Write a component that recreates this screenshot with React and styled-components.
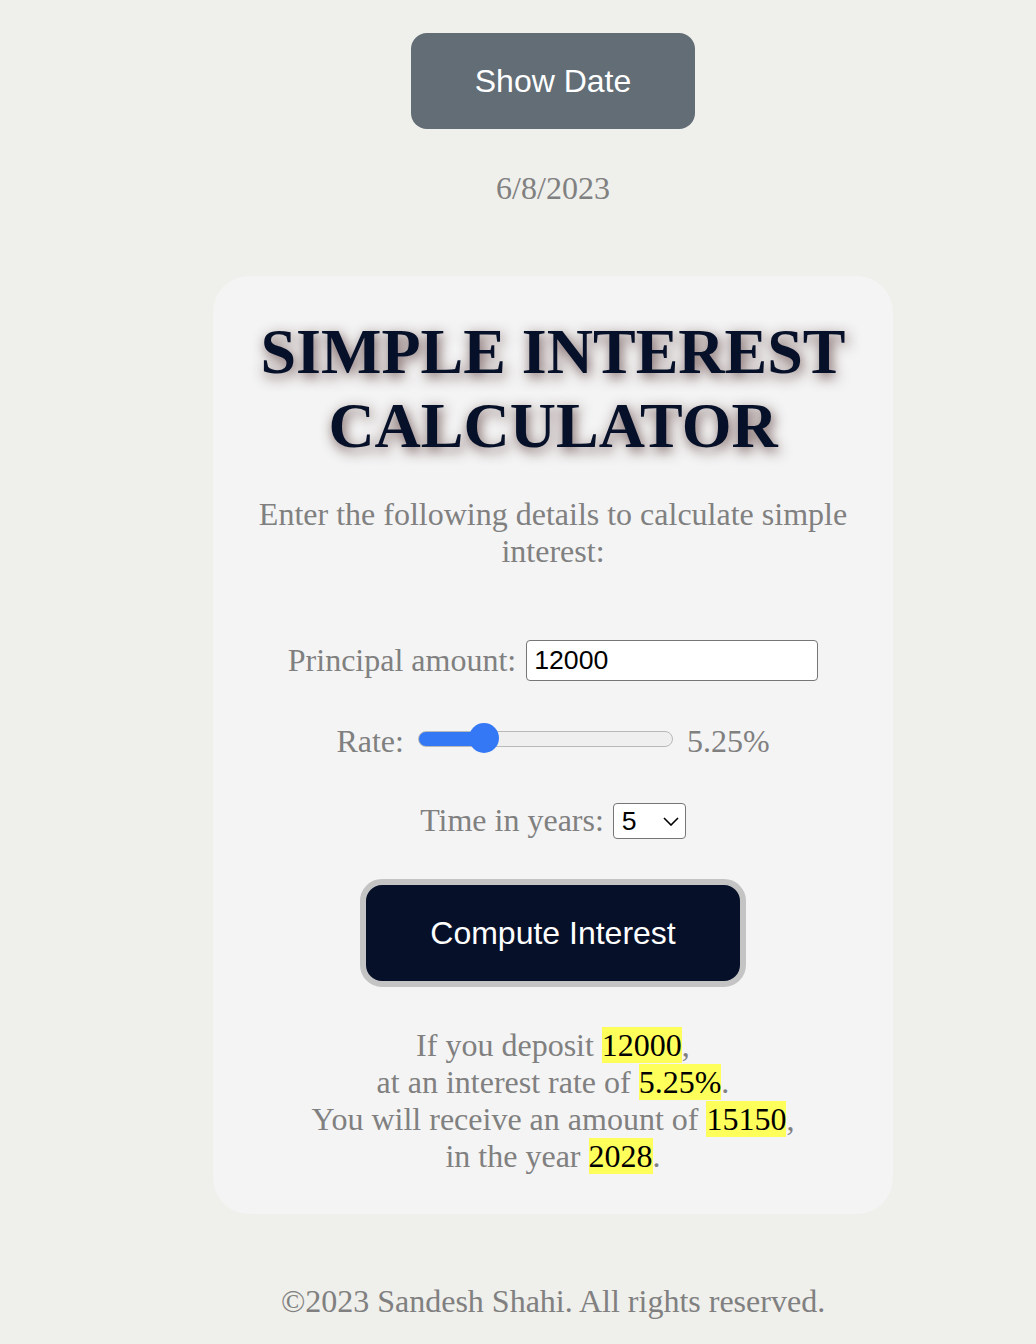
import React, { useState } from 'react';
import styled, { createGlobalStyle } from 'styled-components';

const GlobalStyle = createGlobalStyle`
    html, body {
        margin: 0;
        padding: 0;
        background: #efefeb;
    }
    body {
        font-family: "Liberation Serif", "Times New Roman", serif;
        color: #808080;
    }
`;

const Page = styled.div`
    display: flex;
    flex-direction: column;
    align-items: center;
    padding: 33px 0 30px 70px;
    min-height: 1344px;
    box-sizing: border-box;
`;

const ShowDateButton = styled.button`
    height: 96px;
    padding: 0 64px;
    border: none;
    border-radius: 16px;
    background: #626d76;
    color: #ffffff;
    font-family: "Liberation Sans", Arial, sans-serif;
    font-size: 32px;
    cursor: pointer;
`;

const DateText = styled.p`
    margin: 41px 0 0;
    font-size: 32px;
    line-height: 37px;
`;

const Card = styled.section`
    width: 680px;
    box-sizing: border-box;
    margin-top: 69px;
    padding: 0 40px 39px;
    border-radius: 36px;
    background: #f4f4f4;
    display: flex;
    flex-direction: column;
    align-items: center;
    text-align: center;
`;

const Title = styled.h1`
    margin: 39px 0 0;
    font-size: 64px;
    line-height: 73.5px;
    font-weight: bold;
    color: #061029;
    text-shadow: 2px 4px 13px rgba(95, 65, 65, 0.9);
`;

const Description = styled.p`
    margin: 34px 0 0;
    font-size: 32px;
    line-height: 37px;
`;

const Row = styled.div`
    display: flex;
    align-items: center;
    justify-content: center;
    gap: ${p => p.$gap || 10}px;
    margin-top: ${p => p.$top}px;
    font-size: 32px;
    line-height: 37px;
`;

const TextInput = styled.input`
    width: 292px;
    height: 41px;
    box-sizing: border-box;
    padding: 0 7px;
    border: 1.5px solid #767676;
    border-radius: 4px;
    background: #ffffff;
    font-family: "Liberation Sans", Arial, sans-serif;
    font-size: 26.67px;
    color: #000000;
    outline: none;
`;

const Slider = styled.input`
    -webkit-appearance: none;
    appearance: none;
    width: 255px;
    height: 30px;
    margin: 0 0 6px;
    background: transparent;

    &::-webkit-slider-runnable-track {
        height: 16px;
        box-sizing: border-box;
        border-radius: 8px;
        border: 1.5px solid #b9b9b9;
        background: linear-gradient(to right, #3478f6 0%, #3478f6 ${p => p.$fill}%, #efefef ${p => p.$fill}%, #efefef 100%);
    }
    &::-webkit-slider-thumb {
        -webkit-appearance: none;
        width: 30px;
        height: 30px;
        margin-top: -8.5px;
        border-radius: 50%;
        background: #3478f6;
        border: none;
    }
`;

const SelectWrap = styled.div`
    position: relative;
    display: flex;
`;

const Select = styled.select`
    -webkit-appearance: none;
    appearance: none;
    width: 73px;
    height: 36px;
    box-sizing: border-box;
    padding: 0 0 0 8px;
    border: 1.5px solid #767676;
    border-radius: 4px;
    background: #ffffff;
    font-family: "Liberation Sans", Arial, sans-serif;
    font-size: 26.67px;
    color: #000000;
    outline: none;
`;

const Chevron = styled.svg`
    position: absolute;
    right: 7px;
    top: 14px;
    pointer-events: none;
`;

const ComputeButton = styled.button`
    margin-top: 40px;
    width: 386px;
    height: 108px;
    box-sizing: border-box;
    border: 6px solid #c4c4c4;
    border-radius: 22px;
    background: #061029;
    color: #ffffff;
    font-family: "Liberation Sans", Arial, sans-serif;
    font-size: 32px;
    cursor: pointer;
`;

const Result = styled.p`
    margin: 40px 0 0;
    font-size: 32px;
    line-height: 37px;
`;

const Highlight = styled.mark`
    background: #ffff5c;
    color: #000000;
`;

const Footer = styled.footer`
    margin-top: 69px;
    font-size: 32px;
    line-height: 37px;
`;

export default function App() {
    const [principal, setPrincipal] = useState('12000');
    const [rate, setRate] = useState(5.25);
    const [years, setYears] = useState('5');
    const min = 1;
    const max = 20;
    const ratio = (rate - min) / (max - min);
    const fill = ((15 + ratio * 225) / 255) * 100;
    const amount = Math.round(Number(principal) * (1 + (rate * Number(years)) / 100));

    return (
        <Page>
            <GlobalStyle />
            <ShowDateButton>Show Date</ShowDateButton>
            <DateText>6/8/2023</DateText>

            <Card>
                <Title>SIMPLE INTEREST CALCULATOR</Title>
                <Description>Enter the following details to calculate simple interest:</Description>

                <Row $top={70} $gap={10}>
                    <label htmlFor="principal">Principal amount:</label>
                    <TextInput
                        id="principal"
                        type="text"
                        value={principal}
                        onChange={e => setPrincipal(e.target.value)}
                    />
                </Row>

                <Row $top={42} $gap={14}>
                    <label htmlFor="rate">Rate:</label>
                    <Slider
                        id="rate"
                        type="range"
                        min={min}
                        max={max}
                        step={0.25}
                        value={rate}
                        $fill={fill}
                        onChange={e => setRate(Number(e.target.value))}
                    />
                    <span>{rate.toFixed(2)}%</span>
                </Row>

                <Row $top={42} $gap={9}>
                    <label htmlFor="years">Time in years:</label>
                    <SelectWrap>
                        <Select id="years" value={years} onChange={e => setYears(e.target.value)}>
                            {[1, 2, 3, 4, 5, 6, 7, 8, 9, 10].map(n => (
                                <option key={n} value={n}>{n}</option>
                            ))}
                        </Select>
                        <Chevron width="16" height="9" viewBox="0 0 16 9">
                            <polyline points="1,1 8,8 15,1" fill="none" stroke="#000" strokeWidth="1.6" />
                        </Chevron>
                    </SelectWrap>
                </Row>

                <ComputeButton>Compute Interest</ComputeButton>

                <Result>
                    If you deposit <Highlight>{principal}</Highlight>,<br />
                    at an interest rate of <Highlight>{rate}%</Highlight>.<br />
                    You will receive an amount of <Highlight>{amount}</Highlight>,<br />
                    in the year <Highlight>{2023 + Number(years)}</Highlight>.
                </Result>
            </Card>

            <Footer>©2023 Sandesh Shahi. All rights reserved.</Footer>
        </Page>
    );
}
